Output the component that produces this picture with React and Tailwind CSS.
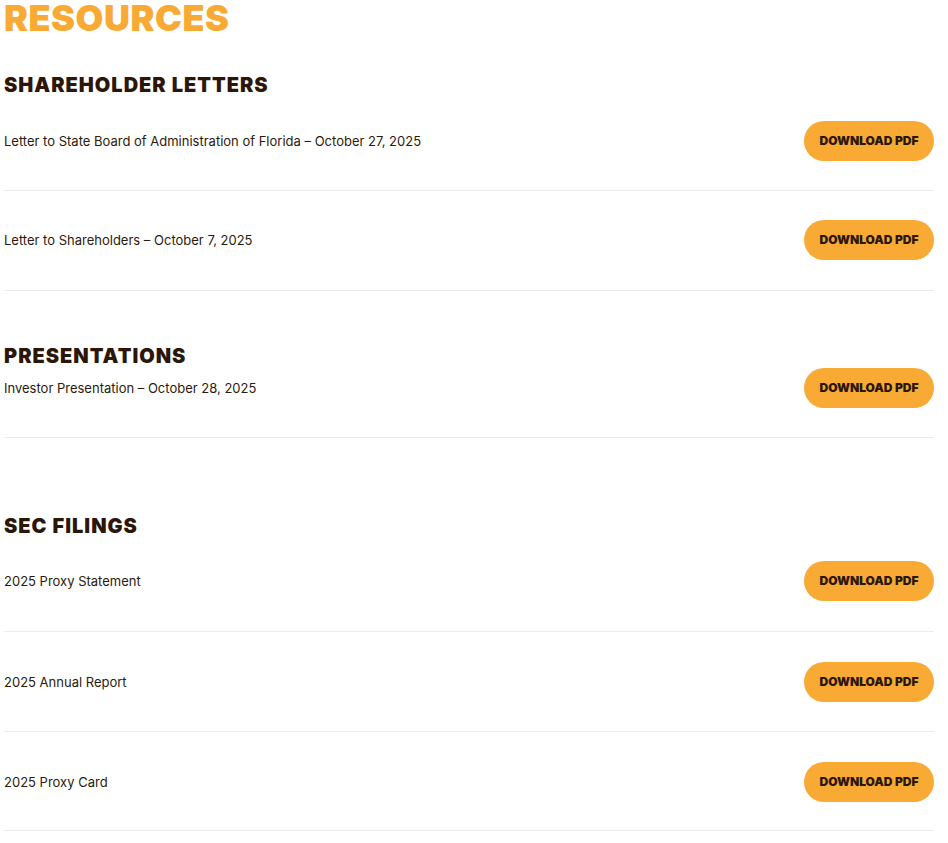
export default function App() {
  const Row = ({ label, className = "" }) => (
    <div className={`flex items-center justify-between border-b border-[#ebebeb] ${className}`}>
      <span className="text-[13px] leading-[20px] text-[#2b1a0e]">{label}</span>
      <button className="h-[40px] w-[130px] rounded-full bg-[#f9aa35] text-[12px] font-black text-[#2b1608]">
        DOWNLOAD PDF
      </button>
    </div>
  );
  return (
    <div className="bg-white min-h-[843px] font-['Inter',sans-serif]">
      <div className="ml-[4px] w-[930px]">
        <h1 className="text-[36px] leading-[36px] font-black text-[#f9aa35] tracking-[0.5px]">RESOURCES</h1>
        <h2 className="mt-[37px] text-[20px] leading-[24px] font-black tracking-[1px] text-[#2b1608]">SHAREHOLDER LETTERS</h2>
        <Row label="Letter to State Board of Administration of Florida – October 27, 2025" className="pt-[24px] pb-[29px]" />
        <Row label="Letter to Shareholders – October 7, 2025" className="pt-[29px] pb-[30px]" />
        <h2 className="mt-[53px] text-[20px] leading-[24px] font-black tracking-[1px] text-[#2b1608]">PRESENTATIONS</h2>
        <Row label="Investor Presentation – October 28, 2025" className="pb-[29px]" />
        <h2 className="mt-[76px] text-[20px] leading-[24px] font-black tracking-[1px] text-[#2b1608]">SEC FILINGS</h2>
        <Row label="2025 Proxy Statement" className="pt-[23px] pb-[30px]" />
        <Row label="2025 Annual Report" className="pt-[30px] pb-[29px]" />
        <Row label="2025 Proxy Card" className="pt-[30px] pb-[28px]" />
      </div>
    </div>
  );
}
